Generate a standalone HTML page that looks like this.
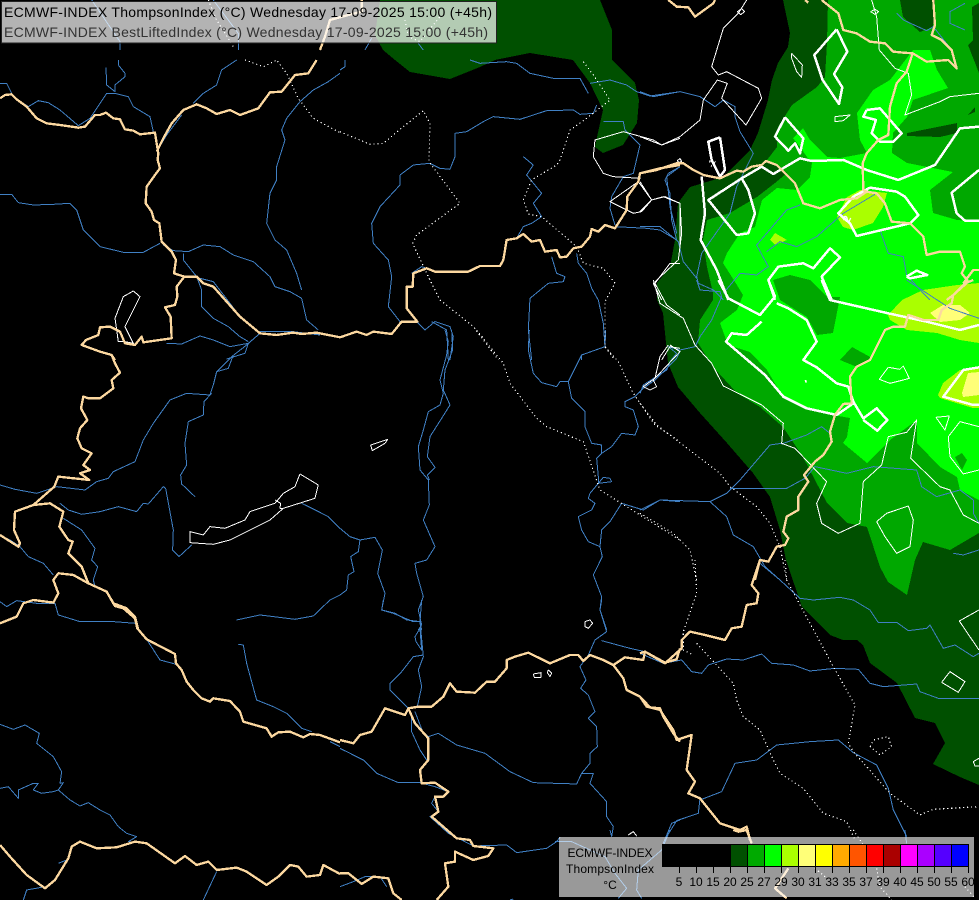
<!DOCTYPE html>
<html><head><meta charset="utf-8"><title>ECMWF-INDEX ThompsonIndex</title>
<style>
html,body{margin:0;padding:0;background:#000;width:979px;height:900px;overflow:hidden}
svg{display:block;position:absolute;left:0;top:0}
polyline{fill:none;stroke-linejoin:round}
.fill polygon{shape-rendering:crispEdges}
.r polyline{stroke:#4080c4;stroke-width:3}
.b polyline{stroke:#fcd8a0;stroke-width:7}
.t polyline{stroke:#fff;stroke-width:3}
.k polyline{stroke:#fff;stroke-width:7.5}
.d polyline{stroke:#fff;stroke-width:3.5;stroke-dasharray:3.5 8.5}
text{font-family:"Liberation Sans",sans-serif}
</style></head><body>
<svg width="979" height="900" viewBox="0 0 979 900" xmlns="http://www.w3.org/2000/svg">
<rect width="979" height="900" fill="#000"/>
<g class="fill">
<polygon fill="#005000" points="380,0 375,35 383,50 395,60 410,72 450,79 480,67 495,60 530,53 573,60 590,83 603,110 597,137 595,147 603,153 623,145 637,123 639,100 635,83 612,60 612,30 600,0"/>
<polygon fill="#005000" points="783,0 790,33 788,47 778,63 772,80 768,100 758,133 750,150 723,177 690,187 678,203 675,240 670,267 657,283 657,300 663,313 668,363 678,387 700,413 727,443 753,473 770,497 780,530 786,560 802,607 830,635 843,640 857,640 863,645 870,663 897,683 915,718 935,723 945,743 933,764 960,777 979,785 979,0"/>
<polygon fill="#00a800" points="828,0 827,43 825,77 817,87 792,105 778,127 777,147 767,160 787,173 775,183 757,197 730,213 707,220 703,240 707,267 713,293 713,300 700,320 698,343 713,367 737,393 760,407 783,427 803,457 827,503 847,523 867,527 880,567 888,582 907,595 915,560 923,542 950,550 979,533 979,0"/>
<polygon fill="#005000" points="900,0 903,17 920,32 933,27 935,0"/>
<polygon fill="#005000" points="979,3 972,7 973,40 968,45 979,73"/>
<polygon fill="#005000" points="907,133 957,123 957,133 940,137 907,136"/>
<polygon fill="#005000" points="968,115 975,107 975,112"/>
<polygon fill="#00ff00" points="913,50 930,50 937,70 948,88 913,100 907,117 893,133 892,153 907,163 953,172 930,190 933,213 957,220 979,222 979,500 960,490 957,477 940,467 917,443 917,420 890,440 867,463 843,443 847,437 850,418 833,415 807,408 783,397 767,370 750,352 728,345 720,323 737,310 743,295 737,285 723,263 727,253 740,233 755,227 762,200 777,188 797,190 810,177 812,163 807,157 800,147 793,138 803,128 810,140 827,157 840,158 867,153 860,140 857,113 873,90 890,80 900,67"/>
<polygon fill="#00a800" points="773,280 790,275 810,280 827,297 840,297 833,333 817,335 807,317 780,300"/>
<polygon fill="#00a800" points="840,360 852,347 872,358 857,367"/>
<polygon fill="#00a800" points="955,457 962,453 967,460 962,470"/>
<polygon fill="#aaff00" points="837,217 847,197 860,190 887,193 883,207 873,223 853,230 843,227"/>
<polygon fill="#aaff00" points="770,240 775,233 787,240 775,245"/>
<polygon fill="#aaff00" points="902,300 923,290 957,285 979,283 979,343 960,340 937,333 907,330 890,320 888,315"/>
<polygon fill="#aaff00" points="938,395 943,383 960,370 979,367 979,408 973,408 953,402 940,398"/>
<polygon fill="#ffff78" points="930,313 943,305 960,305 970,313 960,320 940,322"/>
<polygon fill="#ffff78" points="962,393 968,373 979,372 979,395 963,397"/>
</g>

<!-- rivers -->
<g class="r" shape-rendering="crispEdges">
<g transform="translate(0,60) scale(.3333)">
<polyline points="0,70 20,70 40,110 85,140 115,122 145,128 180,150 235,197 270,175 300,130 320,100 345,100 385,110 400,140 430,158 450,170 460,215"/>
<polyline points="318,22 320,75 345,95 345,75 375,50 375,40 355,15 355,0"/>
<polyline points="470,275 500,225 545,165"/>
<polyline points="580,130 610,100 650,75 665,30 710,0"/>
<polyline points="0,403 35,403 55,428 100,435 160,433 210,430 230,450 250,510 300,560 370,577 430,577 480,550"/>
<polyline points="490,555 520,572 565,575 610,555 660,560 700,585 760,605 810,650 825,680 870,695 905,715 920,780 955,810"/>
<polyline points="900,125 860,175 845,210 855,240 830,320 830,360 810,400 800,490 825,540 860,570 890,640 905,690"/>
<polyline points="900,125 940,90 985,65 1020,40"/>
<polyline points="550,580 550,600 590,650 605,690 605,740 640,775 685,800 720,830 745,845"/>
<polyline points="500,850 545,852 600,828 640,840 690,860 745,850 780,820"/>
<polyline points="745,850 735,880 680,897"/>
<polyline points="600,655 640,665 690,730 720,770 780,820"/>
<polyline points="780,815 880,815 960,825"/>
</g>
<g transform="translate(340,60) scale(.3333)">
<polyline points="0,30 15,20 15,0"/>
<polyline points="390,0 420,10 500,5 530,10 570,40 640,55 720,55 745,100"/>
<polyline points="750,70 810,60 860,75 890,95 930,108 1020,95"/>
<polyline points="180,345 220,315 270,310 300,325 330,328 345,290 345,220 380,215 430,185 460,170 540,178 620,152 700,150 720,163 760,160 770,135"/>
<polyline points="180,345 180,375 120,440 95,490 100,550 145,600 155,650 145,740 180,785"/>
<polyline points="230,785 255,810 285,785 330,800 340,830 330,900"/>
<polyline points="275,785 320,810 325,900"/>
<polyline points="550,290 580,315 560,345 605,400 580,430 605,470 575,490 550,500 530,535"/>
<polyline points="635,590 650,640 675,650 670,665 625,670 570,715 565,810 575,900"/>
<polyline points="710,580 715,610 740,640 755,685 775,720 790,790 795,860 725,885 725,900"/>
<polyline points="790,185 850,185 855,210 900,255 880,340 850,350 815,410 810,445 825,495"/>
<polyline points="825,500 920,505 960,510 1010,540"/>
<polyline points="1020,320 985,340 975,360 990,400 995,480 1010,540"/>
<polyline points="215,640 245,620 260,625"/>
</g>
<g transform="translate(340,330) scale(.3333)">
<polyline points="315,0 325,35 320,75 300,150 310,190 300,225 265,245 250,300 235,350 240,420 265,450 268,525 250,570 285,650 260,690 225,700 230,730 250,800 235,840 245,885 235,900"/>
<polyline points="335,0 338,60 315,120 310,180 330,225 305,265 270,320 262,380 285,412 262,435 268,450"/>
<polyline points="568,0 565,60 580,130 605,158 650,170 660,155 685,155 695,205 735,245 735,290 755,340 785,345 785,370 770,385 775,440 775,460 815,455 810,445 790,442 775,460 750,490 745,505 765,520 755,540 715,560 725,600 745,635 780,650"/>
<polyline points="685,155 725,75 795,50 797,0"/>
<polyline points="780,650 785,600 810,575 845,520 910,540 960,510 1020,515"/>
<polyline points="780,650 787,680 760,735 785,800 780,840 800,900"/>
<polyline points="785,370 815,350 845,310 885,315 895,290 880,240 855,230 855,215 885,200 910,175 945,150 975,120 1010,85 1020,65"/>
<polyline points="0,595 30,620 60,630 105,622 127,660 113,730 135,790 125,840 165,850 200,870 240,875 245,900"/>
<polyline points="60,630 55,665 32,680 42,725 25,735 20,780 0,795"/>
</g>
<g transform="translate(0,330) scale(.3333)">
<polyline points="0,465 45,478 110,490 170,470 255,480 290,455 325,445 340,425 405,395 430,330 460,280 510,210 560,190 630,195 640,165 650,125 695,80 740,45 780,10"/>
<polyline points="650,125 685,115 700,75"/>
<polyline points="635,190 612,215 610,255 565,275 555,340 560,405 542,435 545,462 585,500"/>
<polyline points="180,520 205,540 245,553 300,545 355,530 410,545 430,520 445,522 490,470 497,475 520,600 518,660 537,680 575,645"/>
<polyline points="905,520 930,532 985,560 1020,595"/>
<polyline points="710,870 780,855 885,868 940,858 990,810 1020,795"/>
<polyline points="190,565 245,600 285,655 275,690 293,710 280,750 285,770"/>
<polyline points="0,615 30,630 60,650 85,680 130,700 160,735"/>
<polyline points="0,815 20,830 50,812 110,820 165,820 175,855 240,875 340,875 405,880"/>
</g>
<g transform="translate(0,600) scale(.3333)">
<polyline points="0,373 40,388 75,375 118,400 110,430 160,470 185,515 180,550 190,548 175,570 210,600 240,618 265,608 300,630 330,645 355,680 380,700 410,710 385,725 440,730"/>
<polyline points="0,565 25,560 55,595 55,570 100,550 115,550 100,570 125,580 160,575 175,570"/>
<polyline points="715,133 730,135 740,190 770,300 820,320 860,340 905,385 935,395"/>
<polyline points="440,118 480,180 525,192"/>
<polyline points="70,900 80,870 125,862"/>
<polyline points="175,790 200,780"/>
<polyline points="610,900 650,815"/>
<polyline points="1020,440 990,425"/>
</g>
<g transform="translate(340,600) scale(.3333)">
<polyline points="130,0 125,30 160,40 220,65 240,65 250,170 235,210 245,260 232,320"/>
<polyline points="245,0 240,65"/>
<polyline points="225,110 240,85 245,150 228,125 225,110"/>
<polyline points="250,165 220,170 185,215 150,250 150,270 205,325"/>
<polyline points="785,0 780,30 800,95 765,120 745,165 720,200 738,240 722,265 745,285 765,335 745,355 770,380 772,440 750,460 750,490 725,520 710,552 580,548 510,515 435,460 350,435 295,400 265,410 225,370"/>
<polyline points="785,122 870,145 915,155"/>
<polyline points="0,445 30,460 70,480 110,520 175,548 240,548 285,560 325,575"/>
<polyline points="215,350 215,395 240,450 260,480"/>
<polyline points="225,335 250,400"/>
<polyline points="725,520 760,520 750,550 800,605 800,650 820,680 815,710"/>
<polyline points="285,590 275,610 295,635 270,650 325,700 400,738 500,735 520,750 530,758 620,745 650,725 660,712"/>
<polyline points="0,860 40,845 75,830 120,830 140,860"/>
<polyline points="1020,660 995,670 970,730"/>
<polyline points="510,900 520,897"/>
</g>
<g transform="translate(640,560) scale(.3333)">
<polyline points="360,10 420,60 480,115 520,120 600,112 640,120 690,150 715,188 770,187 805,212 860,205 870,195 910,265 945,255 1000,290 1017,280"/>
<polyline points="0,280 70,310 125,300 155,335 185,340 205,315 260,297 310,300 365,282 395,310 460,315 510,333 585,325 655,328 690,370 730,380 830,372 840,395 895,415 1017,415"/>
<polyline points="180,720 245,695 285,610 350,600 410,555 510,545 595,540 640,578 710,615 745,685 760,750 800,830"/>
<polyline points="180,715 175,760 110,782 80,830"/>
</g>
<g transform="translate(640,280) scale(.3333)">
<polyline points="170,0 180,30 240,35 245,50 215,120 180,170 165,200 120,210 85,200 110,220 90,245 80,270 10,315 0,340"/>
<polyline points="800,0 930,85 1017,115"/>
<polyline points="425,492 500,465 545,440 570,460"/>
<polyline points="270,625 440,625 495,595 525,560 620,580 700,560 830,570 845,620 890,650 960,630 1000,660 1000,700 1017,730"/>
<polyline points="0,690 60,660 210,665 260,640 300,600 390,495 425,490"/>
<polyline points="210,665 260,710 280,765 340,800 375,860 420,900"/>
<polyline points="940,820 970,825 1017,810"/>
</g>
<g transform="translate(640,0) scale(.3333)">
<polyline points="0,275 40,290 120,275 180,290 225,320 250,300 285,320 285,350 300,395 340,460 320,500 290,560 270,640 185,760 170,830 175,850 220,870 250,900"/>
<polyline points="0,680 60,680 115,725 130,785 170,835"/>
<polyline points="120,500 80,530 90,620 110,700"/>
<polyline points="480,615 440,630 380,700 350,735 385,800 350,825 300,820 250,880"/>
<polyline points="710,580 610,640 530,710 470,740 420,725 380,755"/>
<polyline points="720,690 745,760 790,770 800,825 850,880 870,900"/>
<polyline points="770,40 790,60 860,92 880,80 935,150"/>
<polyline points="975,10 930,35 930,70 975,90"/>
</g>
<g transform="translate(555,830) scale(.3333)">
<polyline points="0,35 50,35 150,80 180,130 215,175 190,205"/>
<polyline points="345,0 320,60 250,120 245,180 260,205"/>
<polyline points="165,0 170,20"/>
<polyline points="1050,0 1055,40"/>
</g>
<g transform="translate(0,0) scale(.3333)">
<polyline points="275,0 360,125 360,150"/>
<polyline points="640,0 715,100 715,150"/>
<polyline points="1115,115 1095,150"/>
<polyline points="1255,130 1270,150"/>
</g>
</g>

<!-- dotted -->
<g class="d" shape-rendering="crispEdges">
<g transform="translate(340,60) scale(.3333)">
<polyline points="730,5 760,45 810,120 740,175 690,210 660,300 650,315 575,360 550,420 565,462 605,470 710,560 730,610 790,625 825,670 795,725 795,860 825,900"/>
<polyline points="0,215 90,253 130,250 190,200 250,152 270,190 267,305 360,430 230,525 218,550 260,640 300,720 400,800 475,900"/>
</g>
<g transform="translate(0,60) scale(.3333)">
<polyline points="735,0 790,20 830,0 860,40 895,115 940,175 1020,218"/>
</g>
<g transform="translate(340,330) scale(.3333)">
<polyline points="410,0 490,100 510,160 590,265 620,290 730,335 780,480 1020,630"/>
<polyline points="795,50 835,95 880,190 945,285 1020,335"/>
</g>
<g transform="translate(640,280) scale(.3333)">
<polyline points="0,370 50,435 240,580 270,620 350,680 390,730 420,800 440,900"/>
<polyline points="0,700 100,760 150,810 170,900"/>
</g>
<g transform="translate(640,560) scale(.3333)">
<polyline points="165,0 170,100 130,215 130,270 160,285"/>
<polyline points="170,250 280,370 290,420 310,470 360,510 400,600 420,640 490,685 550,760 620,785 645,840"/>
<polyline points="435,0 440,60 580,320 645,435 625,550 640,575 750,700 840,765 880,748 1017,740"/>
<polyline points="690,560 700,540 745,530 755,560 720,585 690,560"/>
</g>
<g transform="translate(555,830) scale(.3333)">
<polyline points="895,0 935,60"/>
<polyline points="780,115 810,140"/>
<polyline points="965,115 975,170 1010,210"/>
<polyline points="1230,170 1260,205"/>
</g>
<g transform="translate(0,0) scale(.3333)">
<polyline points="625,0 650,60 700,140"/>
<polyline points="1215,60 1225,110 1260,125 1320,50"/>
</g>
</g>

<!-- thin white -->
<g class="t" shape-rendering="crispEdges">
<g transform="translate(640,0) scale(.3333)">
<polyline points="320,0 295,40 250,85 215,200 235,225 260,215 355,265 365,295 318,375 245,295 262,250 232,240 190,300 180,360 120,410 65,435 0,410"/>
<polyline points="695,0 710,50 718,150 765,205 805,220 815,285 795,345 900,305 930,290 1017,280"/>
<polyline points="0,635 35,600 75,590 120,610 125,700 115,780 40,850 65,900"/>
<polyline points="0,545 35,600"/>
<polyline points="455,160 487,195 485,232 470,215 455,175 455,160"/>
<polyline points="585,350 630,345 610,362 585,365 585,350"/>
<polyline points="292,35 305,26 314,35 302,44 292,35"/>
<polyline points="692,35 705,28 716,35 705,43 692,35"/>
<polyline points="112,482 120,476 125,484 117,488 112,482"/>
</g>
<g transform="translate(640,280) scale(.3333)">
<polyline points="40,0 60,70 130,115 165,195 215,250 250,318 305,345 365,375 430,430 425,490 465,505 560,605 530,670 545,730 595,760 660,730 670,605 725,555 745,470 800,457 830,420 812,535 900,620 930,630 970,705 1017,730"/>
<polyline points="745,262 780,268 790,258 808,295 790,300 750,310 718,298 745,262"/>
<polyline points="710,725 740,700 805,678 820,720 810,800 770,820 735,770 710,725"/>
<polyline points="888,412 928,408 915,450 888,412"/>
<polyline points="1017,440 960,425 925,470 930,530 970,582 1017,570"/>
</g>
<g transform="translate(640,560) scale(.3333)">
<polyline points="1017,150 958,183 1017,270"/>
<polyline points="905,367 930,335 975,365 955,397 905,367"/>
<polyline points="1017,595 1000,605 1005,618 1017,618"/>
</g>
<g transform="translate(340,60) scale(.3333)">
<polyline points="1020,235 965,255 940,240 850,215 765,240 760,290 790,340 820,350 900,355 895,365"/>
<polyline points="895,365 810,425 880,460 905,455 935,420 895,365"/>
<polyline points="935,420 970,410 1020,430 1020,560"/>
<polyline points="1020,610 990,610 945,670 980,735 1020,765"/>
<polyline points="1020,865 990,860 965,900"/>
</g>
<g transform="translate(340,330) scale(.3333)">
<polyline points="985,45 960,80 945,145 910,170 930,180 950,170 940,150 1020,65 990,45"/>
<polyline points="92,345 143,328 135,340 97,362 92,345"/>
<polyline points="735,875 750,870 758,880 745,895 735,890 735,875"/>
</g>
<g transform="translate(0,60) scale(.3333)">
<polyline points="400,693 420,710 375,800 400,850 375,845 355,845 345,775 370,710 400,693"/>
</g>
<g transform="translate(0,330) scale(.3333)">
<polyline points="900,432 955,465 945,505 850,535 810,570 690,630 640,643 570,638 570,605 610,615 630,590 675,595 735,570 750,545 825,520 850,490 885,470 900,432"/>
<polyline points="825,510 842,520 840,535 850,535"/>
</g>
<g transform="translate(340,600) scale(.3333)">
<polyline points="580,222 603,218 603,232 583,232 580,222"/>
<polyline points="625,210 635,220 630,230 622,218 625,210"/>
<polyline points="865,705 880,695 890,708"/>
</g>
</g>

<!-- thick white contours -->
<g class="k" shape-rendering="crispEdges">
<g transform="translate(640,0) scale(.3333)">
<polyline points="590,88 622,155 582,222 607,262 597,312 548,240 523,165 590,88"/>
<polyline points="435,352 490,415 480,460 465,430 445,452 405,410 435,352"/>
<polyline points="240,412 205,425 215,480 240,530 255,510 240,412"/>
<polyline points="185,530 195,640 182,720 230,810 265,900"/>
<polyline points="305,535 205,600 290,705 325,700 345,640 325,570 305,535 365,500 400,522 480,475 515,483 610,480 680,510 775,540 885,495 960,385 1017,380"/>
<polyline points="680,330 720,325 785,400 760,425 720,425 695,400 708,360 670,350 680,330"/>
<polyline points="690,563 770,575 795,590 835,645 810,670 650,708 630,670 595,640 640,590 690,563"/>
<polyline points="1017,510 935,578 950,640 975,662 1017,662"/>
<polyline points="405,900 385,840 415,800 490,790 520,805 570,745 600,772 545,830 575,900"/>
<polyline points="800,830 830,812 862,825 810,835 800,830"/>
</g>
<g transform="translate(640,280) scale(.3333)">
<polyline points="235,0 265,55 360,105 405,50 385,0"/>
<polyline points="410,70 445,85 500,120 530,185 490,240 530,262 590,310 625,320 640,365 670,415 710,385 742,420 712,452 670,420"/>
<polyline points="365,125 320,165 275,160 258,185 375,285 430,350 500,385 590,405 640,370"/>
<polyline points="545,0 570,60 745,100 860,125 960,150 1017,135"/>
<polyline points="1017,262 970,270 910,350 1000,375 1017,375"/>
<polyline points="495,305 500,303"/>
</g>
</g>

<!-- borders -->
<g class="b" shape-rendering="crispEdges">
<g transform="translate(0,60) scale(.3333)">
<polyline points="0,115 15,105 35,103 50,118 80,140 110,175 140,190 180,195 235,203 255,200 285,165 300,165 318,158 340,175 360,178 375,208 400,212 420,223 465,218 470,250 475,280 473,300 480,325 465,345 440,380 437,430 455,455 462,480 478,490 485,545 515,575 528,600 522,640 553,650 590,650 610,670 640,680 680,725 720,770 780,820 830,825 880,818 905,822 950,818 1020,832"/>
<polyline points="470,275 490,235 515,190 550,150 590,133 620,145 650,162 690,150 720,165 775,145 810,97 845,95 885,45 925,40 950,0"/>
<polyline points="553,650 530,680 532,710 525,735 495,742 512,770 515,835 430,847 425,830 405,855 375,850 360,815 330,800 300,802 295,825 258,840 245,855 300,875 335,885 345,900"/>
</g>
<g transform="translate(0,330) scale(.3333)">
<polyline points="335,75 345,100 360,128 335,150 340,175 300,205 265,205 250,200 243,235 262,270 240,295 232,325 245,355 275,370 250,405 270,420 240,430 268,450 175,440 163,470 100,525 45,545 42,600 60,640 55,650 0,615"/>
<polyline points="100,525 150,520 190,545 178,590 205,630 218,635 205,670 245,710 265,760 320,785 340,820 380,835 405,860 415,900"/>
<polyline points="265,760 220,735 175,730 160,750 175,790 160,818 100,810 70,820 50,860 0,880"/>
</g>
<g transform="translate(0,600) scale(.3333)">
<polyline points="335,0 345,18 370,25 405,55 412,85 440,118 525,162 528,190 545,210 560,245 580,270 605,295 630,305 640,295 690,303 720,335 730,365 800,385 815,410 835,397 870,395 910,412 930,402 960,405 1020,427"/>
<polyline points="0,735 30,770 80,825 135,865 165,840 205,775 215,740 240,725 290,745 350,742 405,725 440,730 525,790 555,768 590,795 625,785 650,810 710,803 740,815 800,855 835,830 870,795 895,800 920,830 960,825 970,795 1020,822"/>
</g>
<g transform="translate(340,600) scale(.3333)">
<polyline points="0,420 40,430 60,405 95,395 135,325 195,345 205,325 235,320 275,320 310,290 330,250 350,275 405,278 440,245 465,245 500,205 500,180 525,170 565,158 630,190 690,165 715,165 730,183 750,165 790,180 820,195 855,172 910,180 915,155 975,188 1010,178 1020,145"/>
<polyline points="820,195 850,235 860,270 900,290 930,322 960,325 970,350 1000,400 1020,425"/>
<polyline points="205,325 225,370 265,415 265,480 240,510 245,550 285,548 325,575 310,590 285,590 295,635 275,650 350,715 390,720 400,738 460,745 445,768 400,780 345,755 345,785 315,790 325,860 290,900"/>
<polyline points="0,820 25,820 65,852 100,830 145,835 160,880 185,900"/>
</g>
<g transform="translate(640,560) scale(.3333)">
<polyline points="360,0 335,75 355,100 350,130 320,135 305,200 275,205 255,240 195,225 150,215 125,240 125,265 75,310 15,275 0,280"/>
<polyline points="0,410 20,440 60,450 100,510 110,540 155,525 140,630 165,665 145,700 180,715 240,790 300,810 320,800 330,840"/>
</g>
<g transform="translate(640,280) scale(.3333)">
<polyline points="345,900 360,840 385,845 410,800 435,795 445,775 430,755 440,710 475,690 475,650 505,605 492,585 525,545 550,525 575,485 570,455 585,405 610,372 635,370 630,290 650,260 690,240 705,210 735,150 760,140 795,140 805,105 850,120 895,120 905,90 935,70 940,45 975,10 1000,0"/>
</g>
<g transform="translate(640,0) scale(.3333)">
<polyline points="0,520 50,510 110,490 130,490 160,510 190,525 240,535 290,512 310,515 335,500 365,495 378,483 410,495 440,525 465,550 490,610 540,625 600,600 650,595 680,575 670,570 668,490 680,460 715,420 745,405 750,320 770,250 800,215 818,160 790,158 760,155 735,130 690,125 650,100 610,90 595,40 545,0"/>
<polyline points="818,160 860,185 925,180 950,205 935,150 905,120 875,105 885,75 880,0"/>
<polyline points="680,575 710,580 735,610 755,665 810,670 850,710 860,765 900,755 960,755 975,800 965,820 985,845 940,885 920,900"/>
<polyline points="970,850 1000,810 1017,810"/>
<polyline points="85,0 110,20 145,22 165,50 220,10 225,0"/>
<polyline points="495,0 505,8"/>
</g>
<g transform="translate(340,60) scale(.3333)">
<polyline points="0,832 50,815 80,825 100,815 155,822 185,785 232,785 200,745 200,680 218,680 220,640 260,625 285,635 385,635 420,618 480,618 490,600 500,540 530,535 550,522 575,545 600,540 615,575 650,570 660,592 680,590 700,565 725,560 750,530 755,507 775,515 795,495 825,505 860,450 862,410 895,365 900,340 960,325 1020,315"/>
</g>
<g transform="translate(555,830) scale(.3333)">
<polyline points="535,0 550,5 575,0 590,40"/>
<polyline points="700,115 660,175 695,205"/>
</g>
<g transform="translate(0,0) scale(.3333)">
<polyline points="1085,0 1085,35 1045,45 990,60 975,110 960,150"/>
</g>
</g>

<!-- contour labels -->
<text x="708" y="169" fill="#fff" font-size="9" transform="rotate(-70 710 165)">-1</text>
<text x="843" y="222" fill="#fff" font-size="11" font-weight="bold" transform="rotate(-65 847 218)">2</text>

<!-- top label box -->
<rect x="1.5" y="1.5" width="495" height="41.5" fill="#fff" fill-opacity=".7" stroke="#222" stroke-width="1"/>
<text x="4" y="17" font-size="14" fill="#000" textLength="488" lengthAdjust="spacing">ECMWF-INDEX ThompsonIndex (°C) Wednesday 17-09-2025 15:00 (+45h)</text>
<text x="4" y="37" font-size="14" fill="#333" textLength="484" lengthAdjust="spacing">ECMWF-INDEX BestLiftedIndex (°C) Wednesday 17-09-2025 15:00 (+45h)</text>

<!-- legend -->
<rect x="559" y="837" width="415" height="60" fill="#fff" fill-opacity=".6"/>
<text x="610" y="857" font-size="12" fill="#000" text-anchor="middle" textLength="85" lengthAdjust="spacing">ECMWF-INDEX</text>
<text x="610" y="873" font-size="12" fill="#000" text-anchor="middle" textLength="88" lengthAdjust="spacing">ThompsonIndex</text>
<text x="610" y="889" font-size="12" fill="#000" text-anchor="middle">°C</text>
<g shape-rendering="crispEdges">
<rect x="662" y="844" width="307" height="23" fill="#000"/>
<rect x="731" y="845" width="16" height="21" fill="#005000"/>
<rect x="748" y="845" width="16" height="21" fill="#00aa00"/>
<rect x="765" y="845" width="16" height="21" fill="#00ff00"/>
<rect x="782" y="845" width="16" height="21" fill="#aaff00"/>
<rect x="799" y="845" width="16" height="21" fill="#ffff78"/>
<rect x="816" y="845" width="16" height="21" fill="#ffff00"/>
<rect x="833" y="845" width="16" height="21" fill="#ffaa00"/>
<rect x="850" y="845" width="16" height="21" fill="#ff5500"/>
<rect x="867" y="845" width="16" height="21" fill="#ff0000"/>
<rect x="884" y="845" width="16" height="21" fill="#aa0000"/>
<rect x="901" y="845" width="16" height="21" fill="#ff00ff"/>
<rect x="918" y="845" width="16" height="21" fill="#aa00ff"/>
<rect x="935" y="845" width="16" height="21" fill="#5500ff"/>
<rect x="952" y="845" width="16" height="21" fill="#0000ff"/>
<path fill="none" stroke="#000" stroke-width="1" d="M679.5 866V873M696.5 866V873M713.5 866V873M730.5 866V873M747.5 866V873M764.5 866V873M781.5 866V873M798.5 866V873M815.5 866V873M832.5 866V873M849.5 866V873M866.5 866V873M883.5 866V873M900.5 866V873M917.5 866V873M934.5 866V873M951.5 866V873M968.5 866V873"/>
</g>
<g font-size="12" fill="#000" text-anchor="middle">
<text x="679" y="886">5</text><text x="696" y="886">10</text><text x="713" y="886">15</text><text x="730" y="886">20</text><text x="747" y="886">25</text><text x="764" y="886">27</text><text x="781" y="886">29</text><text x="798" y="886">30</text><text x="815" y="886">31</text><text x="832" y="886">33</text><text x="849" y="886">35</text><text x="866" y="886">37</text><text x="883" y="886">39</text><text x="900" y="886">40</text><text x="917" y="886">45</text><text x="934" y="886">50</text><text x="951" y="886">55</text><text x="968" y="886">60</text>
</g>
</svg>
</body></html>
